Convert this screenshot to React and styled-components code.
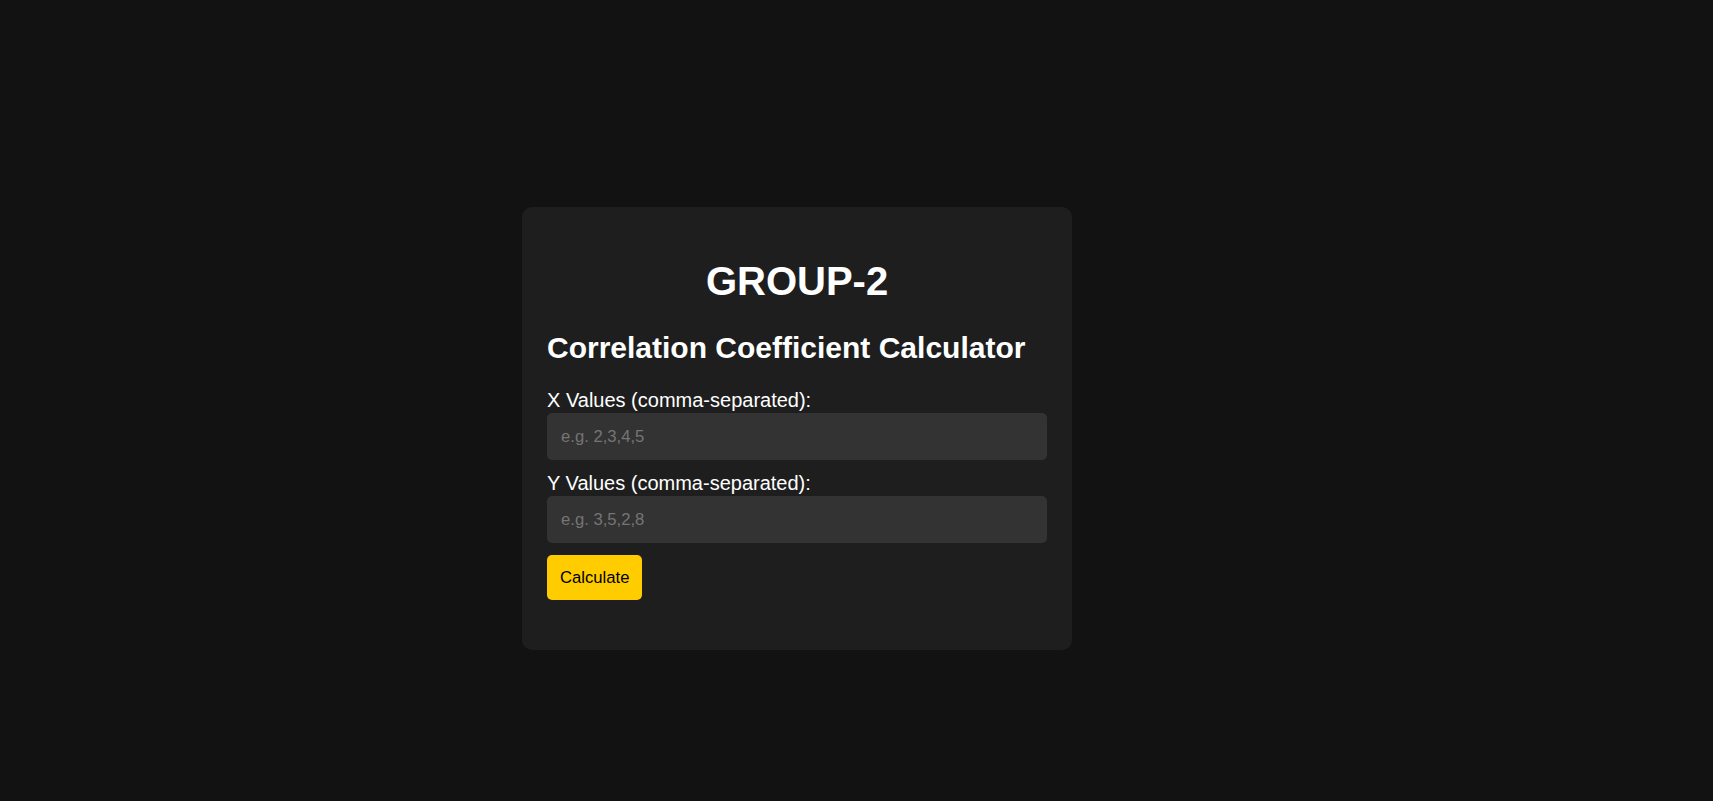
import React from "react";
import styled, { createGlobalStyle } from "styled-components";

const GlobalStyle = createGlobalStyle`
  html, body {
    margin: 0;
    padding: 0;
    background: #121212;
    color: #ffffff;
    font-family: "Liberation Sans", Arial, sans-serif;
  }
  * { box-sizing: border-box; }
`;

const Page = styled.div`
  min-height: 100vh;
  display: flex;
  align-items: flex-start;
  padding: 207px 0 0 522px;
`;

const Card = styled.div`
  width: 550px;
  background: #1e1e1e;
  border-radius: 10px;
  padding: 25px 25px 50px;
`;

const Title = styled.h1`
  margin: 27px 0 27px;
  font-size: 40px;
  font-weight: 700;
  text-align: center;
  line-height: normal;
`;

const Heading = styled.h2`
  margin: 0 0 24px;
  font-size: 30px;
  font-weight: 700;
  line-height: normal;
`;

const Label = styled.label`
  display: block;
  font-size: 20px;
  line-height: normal;
  margin-bottom: 1px;
`;

const Input = styled.input`
  display: block;
  width: 100%;
  height: 47px;
  margin: 0 0 12px;
  padding: 0 14px;
  border: none;
  border-radius: 5px;
  background: #333333;
  color: #ffffff;
  font-family: "Liberation Sans", Arial, sans-serif;
  font-size: 16.67px;
  outline: none;
  &::placeholder {
    color: #757575;
  }
`;

const Button = styled.button`
  display: block;
  height: 45px;
  padding: 0 13px;
  border: none;
  border-radius: 5px;
  background: #ffcc00;
  color: #000000;
  font-family: "Liberation Sans", Arial, sans-serif;
  font-size: 16.67px;
  cursor: pointer;
`;

export default function App() {
  return (
    <>
      <GlobalStyle />
      <Page>
        <Card>
          <Title>GROUP-2</Title>
          <Heading>Correlation Coefficient Calculator</Heading>
          <Label htmlFor="xv">X Values (comma-separated):</Label>
          <Input id="xv" type="text" placeholder="e.g. 2,3,4,5" />
          <Label htmlFor="yv">Y Values (comma-separated):</Label>
          <Input id="yv" type="text" placeholder="e.g. 3,5,2,8" />
          <Button>Calculate</Button>
        </Card>
      </Page>
    </>
  );
}
